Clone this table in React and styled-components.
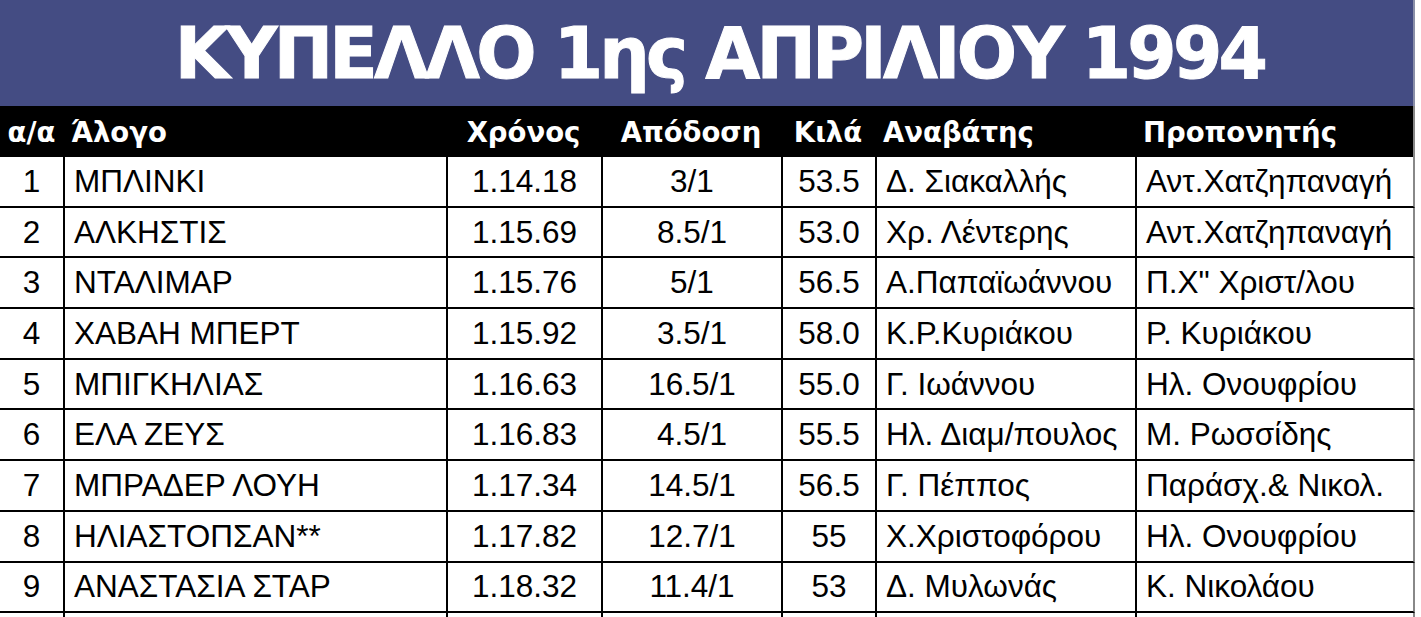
import React from 'react';
import styled, { createGlobalStyle } from 'styled-components';

const Global = createGlobalStyle`
  html, body {
    margin: 0;
    padding: 0;
    background: #ffffff;
  }
`;

const COLS = '63px 383px 155px 180px 94px 260px 280px';

const Page = styled.div`
  width: 1415px;
  font-family: "Liberation Sans", Arial, sans-serif;
  color: #000;
`;

const TitleBar = styled.div`
  height: 106px;
  background: #444c83;
  display: flex;
  align-items: center;
  justify-content: center;
  padding-left: 26px;
  border-right: 2px solid #8a8fa8;
`;

const Title = styled.h1`
  margin: 0;
  font-family: "DejaVu Sans", Verdana, sans-serif;
  font-weight: 700;
  font-size: 71px;
  letter-spacing: -3.8px;
  color: #fff;
  white-space: nowrap;
  -webkit-text-stroke: 1px #fff;
`;

const HeaderRow = styled.div`
  display: grid;
  grid-template-columns: ${COLS};
  height: 51px;
  background: #000;
  border-right: 2px solid #888;
`;

const HeadCell = styled.div`
  display: flex;
  align-items: center;
  justify-content: ${({ $align }) => ($align === 'left' ? 'flex-start' : 'center')};
  padding-left: ${({ $align }) => ($align === 'left' ? '8px' : '0')};
  font-family: "DejaVu Sans", Verdana, sans-serif;
  font-weight: 700;
  font-size: 27.5px;
  color: #fff;
  white-space: nowrap;
`;

const Row = styled.div`
  display: grid;
  grid-template-columns: ${COLS};
  height: 50.7px;
  box-sizing: border-box;
  border-bottom: 2px solid #000;
  border-right: 2px solid #888;
`;

const Cell = styled.div`
  display: flex;
  align-items: center;
  justify-content: ${({ $align }) => ($align === 'left' ? 'flex-start' : 'center')};
  padding-left: ${({ $align }) => ($align === 'left' ? '9px' : '0')};
  border-left: ${({ $first }) => ($first ? 'none' : '2px solid #000')};
  font-size: 31.5px;
  white-space: nowrap;
  overflow: hidden;
`;

const columns = [
  { label: 'α/α', align: 'center' },
  { label: 'Άλογο', align: 'left' },
  { label: 'Χρόνος', align: 'center' },
  { label: 'Απόδοση', align: 'center' },
  { label: 'Κιλά', align: 'center' },
  { label: 'Αναβάτης', align: 'left' },
  { label: 'Προπονητής', align: 'left' },
];

const rows = [
  ['1', 'ΜΠΛΙΝΚΙ', '1.14.18', '3/1', '53.5', 'Δ. Σιακαλλής', 'Αντ.Χατζηπαναγή'],
  ['2', 'ΑΛΚΗΣΤΙΣ', '1.15.69', '8.5/1', '53.0', 'Χρ. Λέντερης', 'Αντ.Χατζηπαναγή'],
  ['3', 'ΝΤΑΛΙΜΑΡ', '1.15.76', '5/1', '56.5', 'Α.Παπαϊωάννου', 'Π.Χ" Χριστ/λου'],
  ['4', 'ΧΑΒΑΗ ΜΠΕΡΤ', '1.15.92', '3.5/1', '58.0', 'Κ.Ρ.Κυριάκου', 'Ρ. Κυριάκου'],
  ['5', 'ΜΠΙΓΚΗΛΙΑΣ', '1.16.63', '16.5/1', '55.0', 'Γ. Ιωάννου', 'Ηλ. Ονουφρίου'],
  ['6', 'ΕΛΑ ΖΕΥΣ', '1.16.83', '4.5/1', '55.5', 'Ηλ. Διαμ/πουλος', 'Μ. Ρωσσίδης'],
  ['7', 'ΜΠΡΑΔΕΡ ΛΟΥΗ', '1.17.34', '14.5/1', '56.5', 'Γ. Πέππος', 'Παράσχ.& Νικολ.'],
  ['8', 'ΗΛΙΑΣΤΟΠΣΑΝ**', '1.17.82', '12.7/1', '55', 'Χ.Χριστοφόρου', 'Ηλ. Ονουφρίου'],
  ['9', 'ΑΝΑΣΤΑΣΙΑ ΣΤΑΡ', '1.18.32', '11.4/1', '53', 'Δ. Μυλωνάς', 'Κ. Νικολάου'],
  ['', '', '', '', '', '', ''],
];

export default function App() {
  return (
    <Page>
      <Global />
      <TitleBar>
        <Title>ΚΥΠΕΛΛΟ 1ης ΑΠΡΙΛΙΟΥ 1994</Title>
      </TitleBar>
      <HeaderRow>
        {columns.map((c) => (
          <HeadCell key={c.label} $align={c.align}>{c.label}</HeadCell>
        ))}
      </HeaderRow>
      {rows.map((r, i) => (
        <Row key={i}>
          {r.map((v, j) => (
            <Cell key={j} $first={j === 0} $align={columns[j].align}>{v}</Cell>
          ))}
        </Row>
      ))}
    </Page>
  );
}
